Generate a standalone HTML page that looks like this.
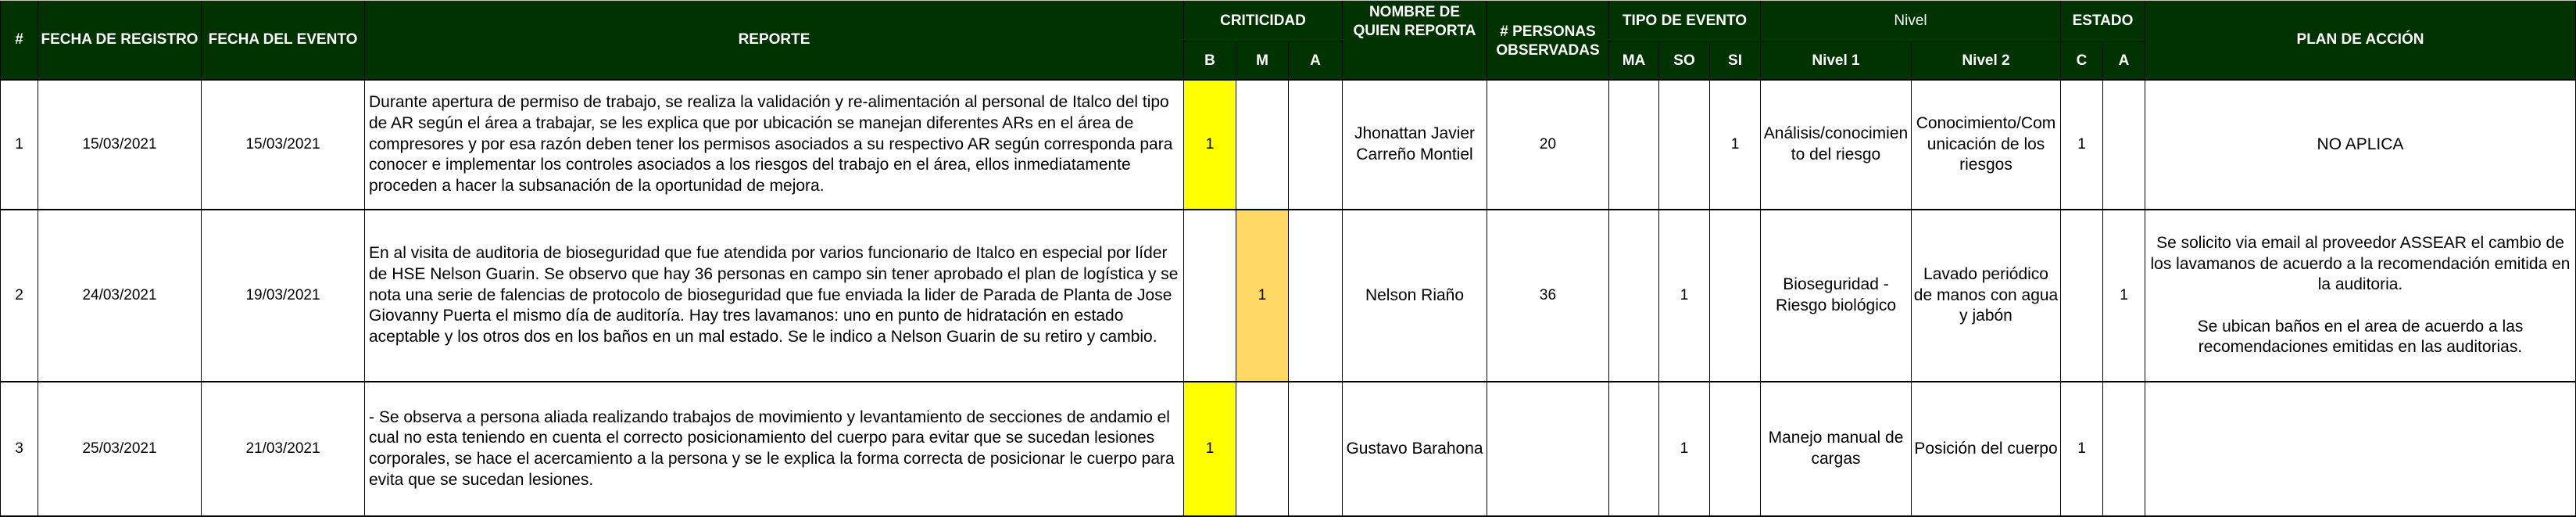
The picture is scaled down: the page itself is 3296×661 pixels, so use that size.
<!DOCTYPE html>
<html><head><meta charset="utf-8">
<style>
*{margin:0;padding:0;box-sizing:border-box}
body{width:3296px;height:661px;background:#fff;position:relative;overflow:hidden;font-family:"Liberation Sans",Arial,sans-serif;}
.c{position:absolute;display:flex;align-items:center;justify-content:center;text-align:center;border-right:1px solid #000;white-space:nowrap;color:#000;font-size:21px;line-height:26.7px}
.h{background:#003300;color:#fff;font-weight:bold;font-size:19px;line-height:24px;border-bottom:1px solid #000}
.hb{border-bottom:2px solid #000}
.b{border-bottom:2px solid #000}
.d{font-size:19px}
.l{justify-content:flex-start;text-align:left;padding-left:5px}
</style></head><body>
<div style="position:absolute;left:0;top:0;width:3296px;height:1px;background:#c8c8c8"></div>

<!-- HEADER -->
<div class="c h hb" style="left:0;top:1px;width:49px;height:102px;border-left:1px solid #000">#</div>
<div class="c h hb" style="left:49px;top:1px;width:209px;height:102px">FECHA DE REGISTRO</div>
<div class="c h hb" style="left:258px;top:1px;width:209px;height:102px">FECHA DEL EVENTO</div>
<div class="c h hb" style="left:467px;top:1px;width:1048px;height:102px">REPORTE</div>
<div class="c h" style="left:1515px;top:1px;width:203px;height:53px">CRITICIDAD</div>
<div class="c h hb" style="left:1515px;top:54px;width:67px;height:49px">B</div>
<div class="c h hb" style="left:1582px;top:54px;width:67px;height:49px">M</div>
<div class="c h hb" style="left:1649px;top:54px;width:69px;height:49px">A</div>
<div class="c h hb" style="left:1718px;top:1px;width:185px;height:102px;align-items:flex-start;padding-top:3px">NOMBRE DE<br>QUIEN REPORTA</div>
<div class="c h hb" style="left:1903px;top:1px;width:156px;height:102px;padding-top:3px">#&nbsp;PERSONAS<br>OBSERVADAS</div>
<div class="c h" style="left:2059px;top:1px;width:194px;height:53px">TIPO DE EVENTO</div>
<div class="c h hb" style="left:2059px;top:54px;width:64px;height:49px">MA</div>
<div class="c h hb" style="left:2123px;top:54px;width:65px;height:49px">SO</div>
<div class="c h hb" style="left:2188px;top:54px;width:65px;height:49px">SI</div>
<div class="c h" style="left:2253px;top:1px;width:384px;height:53px;font-weight:normal">Nivel</div>
<div class="c h hb" style="left:2253px;top:54px;width:193px;height:49px">Nivel 1</div>
<div class="c h hb" style="left:2446px;top:54px;width:191px;height:49px">Nivel 2</div>
<div class="c h" style="left:2637px;top:1px;width:108px;height:53px">ESTADO</div>
<div class="c h hb" style="left:2637px;top:54px;width:54px;height:49px">C</div>
<div class="c h hb" style="left:2691px;top:54px;width:54px;height:49px">A</div>
<div class="c h hb" style="left:2745px;top:1px;width:551px;height:102px">PLAN DE ACCIÓN</div>

<!-- ROW 1 -->
<div class="c b d" style="left:0;top:103px;width:49px;height:166px;border-left:1px solid #000">1</div>
<div class="c b d" style="left:49px;top:103px;width:209px;height:166px">15/03/2021</div>
<div class="c b d" style="left:258px;top:103px;width:209px;height:166px">15/03/2021</div>
<div class="c b l" style="left:467px;top:103px;width:1048px;height:166px">Durante apertura de permiso de trabajo, se realiza la validación y re-alimentación al personal de Italco del tipo<br>de AR según el área a trabajar, se les explica que por ubicación se manejan diferentes ARs en el área de<br>compresores y por esa razón deben tener los permisos asociados a su respectivo AR según corresponda para<br>conocer e implementar los controles asociados a los riesgos del trabajo en el área, ellos inmediatamente<br>proceden a hacer la subsanación de la oportunidad de mejora.</div>
<div class="c b d" style="left:1515px;top:103px;width:67px;height:166px;background:#ffff00">1</div>
<div class="c b" style="left:1582px;top:103px;width:67px;height:166px"></div>
<div class="c b" style="left:1649px;top:103px;width:69px;height:166px"></div>
<div class="c b" style="left:1718px;top:103px;width:185px;height:166px">Jhonattan Javier<br>Carreño Montiel</div>
<div class="c b d" style="left:1903px;top:103px;width:156px;height:166px">20</div>
<div class="c b" style="left:2059px;top:103px;width:64px;height:166px"></div>
<div class="c b" style="left:2123px;top:103px;width:65px;height:166px"></div>
<div class="c b d" style="left:2188px;top:103px;width:65px;height:166px">1</div>
<div class="c b" style="left:2253px;top:103px;width:193px;height:166px;overflow:hidden">Análisis/conocimien<br>to del riesgo</div>
<div class="c b" style="left:2446px;top:103px;width:191px;height:166px;overflow:hidden">Conocimiento/Com<br>unicación de los<br>riesgos</div>
<div class="c b d" style="left:2637px;top:103px;width:54px;height:166px">1</div>
<div class="c b" style="left:2691px;top:103px;width:54px;height:166px"></div>
<div class="c b" style="left:2745px;top:103px;width:551px;height:166px">NO APLICA</div>

<!-- ROW 2 -->
<div class="c b d" style="left:0;top:269px;width:49px;height:220px;border-left:1px solid #000">2</div>
<div class="c b d" style="left:49px;top:269px;width:209px;height:220px">24/03/2021</div>
<div class="c b d" style="left:258px;top:269px;width:209px;height:220px">19/03/2021</div>
<div class="c b l" style="left:467px;top:269px;width:1048px;height:220px">En al visita de auditoria de bioseguridad que fue atendida por varios funcionario de Italco en especial por líder<br>de HSE Nelson Guarin. Se observo que hay 36 personas en campo sin tener aprobado el plan de logística y se<br>nota una serie de falencias de protocolo de bioseguridad que fue enviada la lider de Parada de Planta de Jose<br>Giovanny Puerta el mismo día de auditoría. Hay tres lavamanos: uno en punto de hidratación en estado<br>aceptable y los otros dos en los baños en un mal estado. Se le indico a Nelson Guarin de su retiro y cambio.</div>
<div class="c b" style="left:1515px;top:269px;width:67px;height:220px"></div>
<div class="c b d" style="left:1582px;top:269px;width:67px;height:220px;background:#ffd966">1</div>
<div class="c b" style="left:1649px;top:269px;width:69px;height:220px"></div>
<div class="c b" style="left:1718px;top:269px;width:185px;height:220px">Nelson Riaño</div>
<div class="c b d" style="left:1903px;top:269px;width:156px;height:220px">36</div>
<div class="c b" style="left:2059px;top:269px;width:64px;height:220px"></div>
<div class="c b d" style="left:2123px;top:269px;width:65px;height:220px">1</div>
<div class="c b" style="left:2188px;top:269px;width:65px;height:220px"></div>
<div class="c b" style="left:2253px;top:269px;width:193px;height:220px">Bioseguridad -<br>Riesgo biológico</div>
<div class="c b" style="left:2446px;top:269px;width:191px;height:220px;overflow:hidden">Lavado periódico<br>de manos con agua<br>y jabón</div>
<div class="c b" style="left:2637px;top:269px;width:54px;height:220px"></div>
<div class="c b d" style="left:2691px;top:269px;width:54px;height:220px">1</div>
<div class="c b" style="left:2745px;top:269px;width:551px;height:220px;overflow:hidden">Se solicito via email al proveedor ASSEAR el cambio de<br>los lavamanos de acuerdo a la recomendación emitida en<br>la auditoria.<br>&nbsp;<br>Se ubican baños en el area de acuerdo a las<br>recomendaciones emitidas en las auditorias.</div>

<!-- ROW 3 -->
<div class="c b d" style="left:0;top:489px;width:49px;height:172px;border-left:1px solid #000">3</div>
<div class="c b d" style="left:49px;top:489px;width:209px;height:172px">25/03/2021</div>
<div class="c b d" style="left:258px;top:489px;width:209px;height:172px">21/03/2021</div>
<div class="c b l" style="left:467px;top:489px;width:1048px;height:172px">- Se observa a persona aliada realizando trabajos de movimiento y levantamiento de secciones de andamio el<br>cual no esta teniendo en cuenta el correcto posicionamiento del cuerpo para evitar que se sucedan lesiones<br>corporales, se hace el acercamiento a la persona y se le explica la forma correcta de posicionar le cuerpo para<br>evita que se sucedan lesiones.</div>
<div class="c b d" style="left:1515px;top:489px;width:67px;height:172px;background:#ffff00">1</div>
<div class="c b" style="left:1582px;top:489px;width:67px;height:172px"></div>
<div class="c b" style="left:1649px;top:489px;width:69px;height:172px"></div>
<div class="c b" style="left:1718px;top:489px;width:185px;height:172px;overflow:hidden">Gustavo Barahona</div>
<div class="c b" style="left:1903px;top:489px;width:156px;height:172px"></div>
<div class="c b" style="left:2059px;top:489px;width:64px;height:172px"></div>
<div class="c b d" style="left:2123px;top:489px;width:65px;height:172px">1</div>
<div class="c b" style="left:2188px;top:489px;width:65px;height:172px"></div>
<div class="c b" style="left:2253px;top:489px;width:193px;height:172px">Manejo manual de<br>cargas</div>
<div class="c b" style="left:2446px;top:489px;width:191px;height:172px">Posición del cuerpo</div>
<div class="c b d" style="left:2637px;top:489px;width:54px;height:172px">1</div>
<div class="c b" style="left:2691px;top:489px;width:54px;height:172px"></div>
<div class="c b" style="left:2745px;top:489px;width:551px;height:172px"></div>
</body></html>
